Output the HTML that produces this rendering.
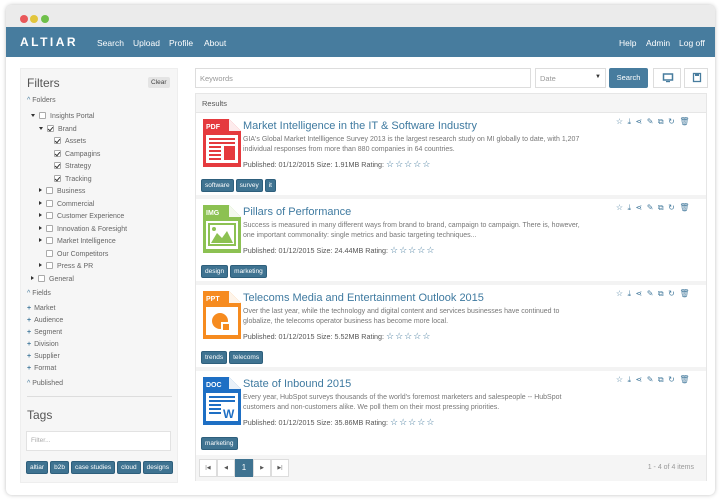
<!DOCTYPE html>
<html><head><meta charset="utf-8"><style>
*{box-sizing:border-box;margin:0;padding:0}
body{width:721px;height:500px;background:#fff;font-family:"Liberation Sans",sans-serif;position:relative;overflow:hidden;color:#555}
.win{position:absolute;left:6px;top:5px;width:709px;height:490px;border-radius:6px;background:#fff;box-shadow:0 0 4px rgba(0,0,0,.25);overflow:hidden}
.tb{height:22px;background:#ebebeb}
.dot{position:absolute;top:10px;width:8px;height:8px;border-radius:50%}
.nav{position:absolute;left:0;top:22px;width:709px;height:30px;background:#477c9e;color:#fff;font-size:8.5px}
.nav span{position:absolute;top:11px}
.logo{font-size:12px;font-weight:bold;letter-spacing:2.5px;left:14px;top:8px!important}
.side{position:absolute;left:14px;top:63px;width:158px;height:415px;background:#f6f6f6;border:1px solid #eee}
.side div{position:absolute;font-size:7px;color:#666;white-space:nowrap}
.cb{display:inline-block;width:7px;height:7px;border:1px solid #aaa;background:#fff;border-radius:1px;vertical-align:-1px;margin-right:4px;position:relative}
.cb.k:after{content:"";position:absolute;left:1px;top:0;width:2px;height:4px;border:solid #333;border-width:0 1.3px 1.3px 0;transform:rotate(40deg)}
.ar{display:inline-block;width:0;height:0;border-left:3px solid #333;border-top:2px solid transparent;border-bottom:2px solid transparent;margin-right:4px;vertical-align:1px}
.ard{display:inline-block;width:0;height:0;border-top:3px solid #333;border-left:2px solid transparent;border-right:2px solid transparent;margin-right:4px;vertical-align:1px}
.pl{color:#477c9e;font-weight:bold;margin-right:3px}
.tag{display:inline-block;background:#3f7391;color:#fff;font-size:6.5px;padding:2px 3px;border-radius:2px;margin-right:2px;border:1px solid #2e5f7c}
.inp{position:absolute;background:#fff;border:1px solid #ddd;font-size:7.5px;color:#999;padding:5px 4px}
.res{position:absolute;left:189px;top:88px;width:512px;height:388px;border:1px solid #e6e6e6;background:#fff}
.rh{height:19px;background:#f5f5f5;border-bottom:1px solid #e6e6e6;font-size:7.5px;padding:5px 6px;color:#555}
.item{position:absolute;left:0;width:510px;height:86px;border-bottom:4px solid #f3f3f3}
.item svg.ic{position:absolute;left:7px;top:6px}
.t{position:absolute;left:47px;top:7px;font-size:11px;color:#3f7aa0}
.d{position:absolute;left:47px;top:22px;font-size:7px;color:#777;line-height:10px;width:345px}
.m{position:absolute;left:47px;font-size:7.2px;color:#555}
.st{color:#477c9e;font-size:9px;letter-spacing:1px}
.tags{position:absolute;left:5px}
.acts{position:absolute;right:12px;top:4px;font-size:8px;color:#477c9e;letter-spacing:4.5px}
.foot{position:absolute;left:0;top:361px;width:510px;height:26px;background:#f5f5f5}
.pg{position:absolute;top:4px;height:18px;width:18px;border:1px solid #ddd;background:#fff;font-size:5px;text-align:center;line-height:16px;color:#555}
</style></head><body>
<div class="win">
<div class="tb"></div>
<div class="dot" style="left:14px;background:#e9585a"></div>
<div class="dot" style="left:24px;background:#e2c53c"></div>
<div class="dot" style="left:35px;background:#6fc04a"></div>
<div class="nav">
<span class="logo">ALTIAR</span>
<span style="left:91px">Search</span><span style="left:127px">Upload</span><span style="left:163px">Profile</span><span style="left:198px">About</span>
<span style="left:613px">Help</span><span style="left:640px">Admin</span><span style="left:673px">Log off</span>
</div>

<div class="side">
<div style="left:6px;top:7px;font-size:12px;color:#555">Filters</div>
<div style="left:127px;top:8px;background:#e4e4e4;padding:2px 3px;font-size:6.5px;color:#444;border-radius:2px">Clear</div>
<div style="left:6px;top:28px"><span style="color:#477c9e">^</span> Folders</div>
<div style="left:10px;top:43px"><span class="ard"></span><span class="cb"></span>Insights Portal</div>
<div style="left:18px;top:56px"><span class="ard"></span><span class="cb k"></span>Brand</div>
<div style="left:33px;top:68px"><span class="cb k"></span>Assets</div>
<div style="left:33px;top:81px"><span class="cb k"></span>Campagins</div>
<div style="left:33px;top:93px"><span class="cb k"></span>Strategy</div>
<div style="left:33px;top:106px"><span class="cb k"></span>Tracking</div>
<div style="left:18px;top:118px"><span class="ar"></span><span class="cb"></span>Business</div>
<div style="left:18px;top:131px"><span class="ar"></span><span class="cb"></span>Commercial</div>
<div style="left:18px;top:143px"><span class="ar"></span><span class="cb"></span>Customer Experience</div>
<div style="left:18px;top:156px"><span class="ar"></span><span class="cb"></span>Innovation &amp; Foresight</div>
<div style="left:18px;top:168px"><span class="ar"></span><span class="cb"></span>Market Intelligence</div>
<div style="left:25px;top:181px"><span class="cb"></span>Our Competitors</div>
<div style="left:18px;top:193px"><span class="ar"></span><span class="cb"></span>Press &amp; PR</div>
<div style="left:10px;top:206px"><span class="ar"></span><span class="cb"></span>General</div>
<div style="left:6px;top:221px"><span style="color:#477c9e">^</span> Fields</div>
<div style="left:6px;top:236px"><span class="pl">+</span>Market</div>
<div style="left:6px;top:248px"><span class="pl">+</span>Audience</div>
<div style="left:6px;top:260px"><span class="pl">+</span>Segment</div>
<div style="left:6px;top:272px"><span class="pl">+</span>Division</div>
<div style="left:6px;top:284px"><span class="pl">+</span>Supplier</div>
<div style="left:6px;top:296px"><span class="pl">+</span>Format</div>
<div style="left:6px;top:311px"><span style="color:#477c9e">^</span> Published</div>
<div style="left:6px;top:327px;width:145px;border-top:1px solid #ddd"></div>
<div style="left:6px;top:339px;font-size:12px;color:#555">Tags</div>
<div style="left:5px;top:362px;width:145px;height:20px;background:#fff;border:1px solid #e2e2e2;padding:5px 4px;color:#aaa;font-size:6.5px">Filter...</div>
<div style="left:5px;top:392px"><span class="tag">altiar</span><span class="tag">b2b</span><span class="tag">case studies</span><span class="tag">cloud</span><span class="tag">designs</span></div>
</div>

<div class="inp" style="left:189px;top:63px;width:336px;height:20px">Keywords</div>
<div class="inp" style="left:529px;top:63px;width:71px;height:20px">Date<span style="position:absolute;right:4px;font-size:6px;color:#333">▼</span></div>
<div style="position:absolute;left:603px;top:63px;width:39px;height:20px;background:#477c9e;color:#fff;font-size:7.5px;text-align:center;line-height:20px;border-radius:2px">Search</div>
<div class="inp" style="left:647px;top:63px;width:28px;height:20px;padding:0"><svg width="28" height="18" viewBox="0 0 28 18"><rect x="9.5" y="5" width="9" height="6" fill="none" stroke="#477c9e" stroke-width="1.5"/><rect x="12" y="12" width="4" height="1.2" fill="#477c9e"/></svg></div>
<div class="inp" style="left:678px;top:63px;width:24px;height:20px;padding:0"><svg width="24" height="18" viewBox="0 0 24 18"><rect x="8.5" y="4.5" width="7" height="8" fill="none" stroke="#477c9e" stroke-width="1.3"/><rect x="10" y="4.5" width="4" height="2.5" fill="#477c9e"/></svg></div>

<div class="res">
<div class="rh">Results</div>

<div class="item" style="top:19px">
<svg class="ic" width="38" height="48" viewBox="0 0 38 48"><path d="M0 0H26L38 12V48H0Z" fill="#e53a3e"/><path d="M26 0V12H38" fill="#fff" opacity=".9"/><rect x="3" y="16" width="32" height="28" fill="#fff"/><g fill="#e53a3e"><rect x="6" y="19" width="26" height="2"/><rect x="6" y="23" width="26" height="2"/><rect x="6" y="27" width="12" height="2"/><rect x="6" y="31" width="12" height="2"/><rect x="6" y="35" width="12" height="2"/><rect x="6" y="39" width="12" height="2"/><rect x="21" y="27" width="11" height="14"/></g><text x="3" y="10" font-size="7" font-weight="bold" fill="#fff" font-family="Liberation Sans">PDF</text></svg>
<div class="t">Market Intelligence in the IT &amp; Software Industry</div>
<div class="d">GIA's Global Market Intellligence Survey 2013 is the largest research study on MI globally to date, with 1,207 individual responses from more than 880 companies in 64 countries.</div>
<div class="m" style="top:46px">Published: 01/12/2015 Size: 1.91MB Rating: <span class="st">☆☆☆☆☆</span></div>
<div class="tags" style="top:61px"><span class="tag">software</span><span class="tag">survey</span><span class="tag">it</span></div>
<div class="acts">☆⤓⋖✎⧉↻🗑</div>
</div>

<div class="item" style="top:105px">
<svg class="ic" width="38" height="48" viewBox="0 0 38 48"><path d="M0 0H26L38 12V48H0Z" fill="#8cc152"/><path d="M26 0V12H38" fill="#fff" opacity=".9"/><rect x="3" y="16" width="32" height="28" fill="#fff"/><rect x="6" y="19" width="26" height="21" fill="none" stroke="#8cc152" stroke-width="2"/><path d="M8 38L14 28L19 33L24 26L30 38Z" fill="#8cc152"/><circle cx="11" cy="24" r="2" fill="#8cc152"/><text x="3" y="10" font-size="7" font-weight="bold" fill="#fff" font-family="Liberation Sans">IMG</text></svg>
<div class="t">Pillars of Performance</div>
<div class="d">Success is measured in many different ways from brand to brand, campaign to campaign. There is, however, one important commonality: single metrics and basic targeting techniques...</div>
<div class="m" style="top:46px">Published: 01/12/2015 Size: 24.44MB Rating: <span class="st">☆☆☆☆☆</span></div>
<div class="tags" style="top:61px"><span class="tag">design</span><span class="tag">marketing</span></div>
<div class="acts">☆⤓⋖✎⧉↻🗑</div>
</div>

<div class="item" style="top:191px">
<svg class="ic" width="38" height="48" viewBox="0 0 38 48"><path d="M0 0H26L38 12V48H0Z" fill="#f68b1f"/><path d="M26 0V12H38" fill="#fff" opacity=".9"/><rect x="3" y="16" width="32" height="28" fill="#fff"/><circle cx="17" cy="30" r="8" fill="#f68b1f"/><rect x="18" y="31" width="8" height="8" fill="#fff"/><rect x="20" y="33" width="6" height="6" fill="#f68b1f"/><text x="3" y="10" font-size="7" font-weight="bold" fill="#fff" font-family="Liberation Sans">PPT</text></svg>
<div class="t">Telecoms Media and Entertainment Outlook 2015</div>
<div class="d">Over the last year, while the technology and digital content and services businesses have continued to globalize, the telecoms operator business has become more local.</div>
<div class="m" style="top:46px">Published: 01/12/2015 Size: 5.52MB Rating: <span class="st">☆☆☆☆☆</span></div>
<div class="tags" style="top:61px"><span class="tag">trends</span><span class="tag">telecoms</span></div>
<div class="acts">☆⤓⋖✎⧉↻🗑</div>
</div>

<div class="item" style="top:277px;border:none">
<svg class="ic" width="38" height="48" viewBox="0 0 38 48"><path d="M0 0H26L38 12V48H0Z" fill="#1e6fc4"/><path d="M26 0V12H38" fill="#fff" opacity=".9"/><rect x="3" y="16" width="32" height="28" fill="#fff"/><g fill="#1e6fc4"><rect x="6" y="19" width="26" height="2"/><rect x="6" y="23" width="26" height="2"/><rect x="6" y="27" width="12" height="2"/><rect x="6" y="31" width="12" height="2"/><rect x="6" y="35" width="12" height="2"/></g><text x="20" y="41" font-size="12" font-weight="bold" fill="#1e6fc4" font-family="Liberation Sans">W</text><text x="3" y="10" font-size="7" font-weight="bold" fill="#fff" font-family="Liberation Sans">DOC</text></svg>
<div class="t">State of Inbound 2015</div>
<div class="d">Every year, HubSpot surveys thousands of the world's foremost marketers and salespeople -- HubSpot customers and non-customers alike. We poll them on their most pressing priorities.</div>
<div class="m" style="top:46px">Published: 01/12/2015 Size: 35.86MB Rating: <span class="st">☆☆☆☆☆</span></div>
<div class="tags" style="top:61px"><span class="tag">marketing</span></div>
<div class="acts">☆⤓⋖✎⧉↻🗑</div>
</div>

<div class="foot">
<div class="pg" style="left:3px">|◀</div><div class="pg" style="left:21px">◀</div>
<div class="pg" style="left:39px;background:#3f7391;color:#fff;border-color:#3f7391;font-size:8px">1</div>
<div class="pg" style="left:57px">▶</div><div class="pg" style="left:75px">▶|</div>
<div style="position:absolute;right:12px;top:9px;font-size:7px;color:#999">1 - 4 of 4 items</div>
</div>
</div>
</div>
</body></html>
